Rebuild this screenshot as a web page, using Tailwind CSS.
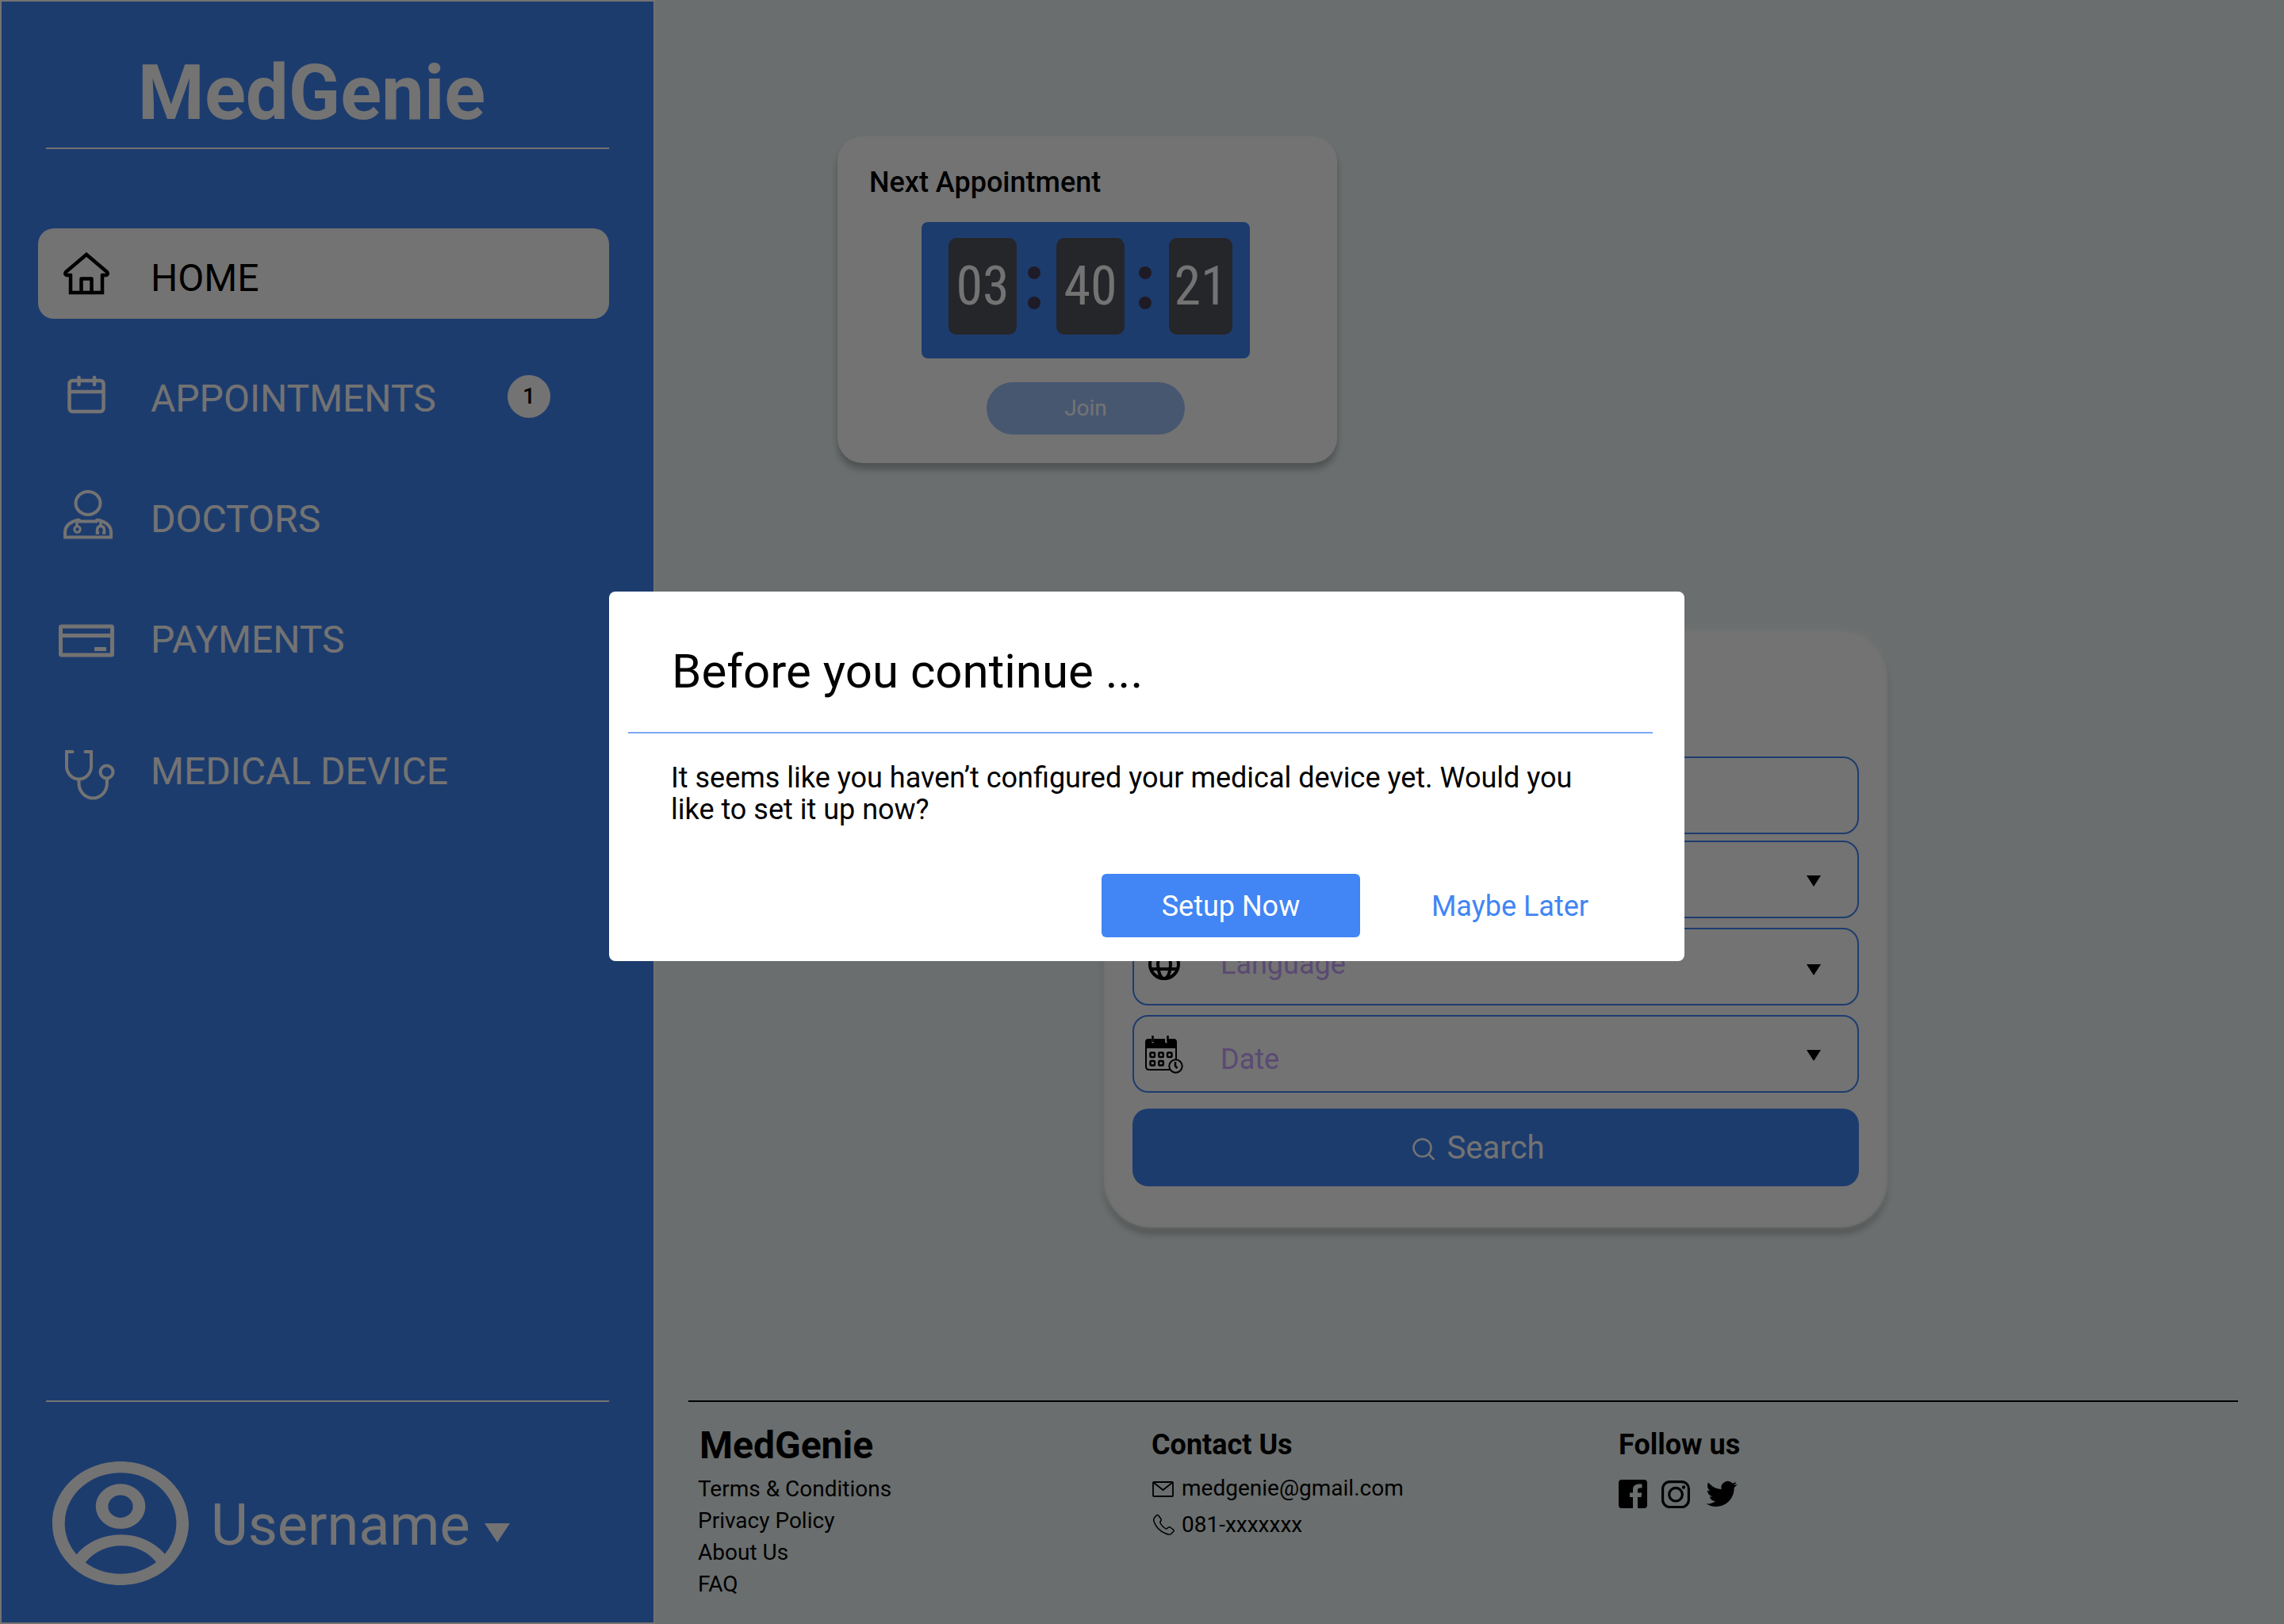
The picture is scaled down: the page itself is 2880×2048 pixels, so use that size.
<!DOCTYPE html>
<html lang="en">
<head>
<meta charset="utf-8">
<meta name="viewport" content="width=device-width, initial-scale=1">
<title>MedGenie</title>
<script src="https://cdn.jsdelivr.net/npm/@tailwindcss/browser@4"></script>
</head>
<body class="bg-[#ebf4f4] font-[Roboto,sans-serif] text-black">
<div class="flex min-h-screen">

  <!-- Sidebar -->
  <aside class="flex w-[826px] shrink-0 flex-col border-2 border-white bg-[#4285f4] text-white">
    <div class="ml-14 mr-14 border-b-2 border-white pt-[59px] pr-10 pb-[13px] text-center text-8xl leading-[112px] font-bold">MedGenie</div>
    <nav class="mt-[100px] mr-14 ml-[46px] flex flex-col gap-[38px] text-5xl leading-[56px]">
      <a href="#" class="flex h-[114px] items-center rounded-[20px] bg-white pl-5 text-black">
        <svg class="h-24 w-20 shrink-0" viewBox="0 0 80 96" fill="none" stroke="currentColor" stroke-width="4.5" stroke-linejoin="round" stroke-linecap="round"><path d="M21 50h-5q-3-1-1-4L41 24l26 22q2 3-1 4h-5" stroke-linejoin="miter"/><path d="M21 50v22h40V50" stroke-linejoin="miter"/><path d="M34.500 72V54.500h13V72"/></svg>
        <span class="pt-3 pl-[42px]">HOME</span>
      </a>
      <a href="#" class="flex h-[114px] items-center pl-5">
        <svg class="h-24 w-20 shrink-0" viewBox="0 0 80 96" fill="none" stroke="currentColor" stroke-width="4.500" stroke-linecap="round"><rect x="19.500" y="31" width="43" height="39" rx="4"/><path d="M19.500 45h43"/><path d="M31.500 27v9M51 27v9"/></svg>
        <span class="pt-3 pl-[42px]">APPOINTMENTS</span>
        <span class="mt-1.5 ml-auto mr-[74px] flex size-[54px] items-center justify-center rounded-full bg-white text-[28px] leading-8 font-medium text-black">1</span>
      </a>
      <a href="#" class="flex h-[114px] items-center pl-5">
        <svg class="h-24 w-20 shrink-0" viewBox="0 0 80 96" fill="none" stroke="currentColor" stroke-width="4"><ellipse cx="43" cy="33.500" rx="15.500" ry="14.500"/><path d="M31 54.500q-17 4-17 16V76.500h58V70.500q0-12-17-16"/><path d="M31 53.500l1.500 3h21l1.500-3"/><path d="M29 57v6M59 57v6" stroke-width="3.500"/><circle cx="29.500" cy="66.500" r="3.700" stroke-width="3"/><path d="M57 71h-2.500v-3q0-5.500 4.500-5.500t4.500 5.500v3H61" stroke-width="3.500"/></svg>
        <span class="pt-3 pl-[42px]">DOCTORS</span>
      </a>
      <a href="#" class="flex h-[114px] items-center pl-5">
        <svg class="h-24 w-20 shrink-0" viewBox="0 0 80 96" fill="none" stroke="currentColor" stroke-width="5"><rect x="8.500" y="37" width="65" height="36" rx="1"/><path d="M8 48.500h66"/><path d="M51 65.500h15"/></svg>
        <span class="pt-3 pl-[42px]">PAYMENTS</span>
      </a>
      <a href="#" class="mt-3.5 flex h-[114px] items-center pl-5">
        <svg class="h-24 w-20 shrink-0" viewBox="0 0 80 96" fill="none" stroke="currentColor" stroke-width="4" stroke-linecap="round"><path d="M23.500 29H16v18.500a15.500 16 0 0 0 31 0V29h-7.500"/><path d="M31.500 64v5a17.700 18.500 0 0 0 35.400 0V64"/><circle cx="66.500" cy="54.500" r="8"/></svg>
        <span class="pt-3 pl-[42px]">MEDICAL DEVICE</span>
      </a>
    </nav>
    <div class="mx-14 mt-auto border-t-2 border-white"></div>
    <button type="button" class="mt-[75px] mb-[47px] ml-16 flex items-center self-start text-7xl leading-[84px]">
      <svg class="h-[156px] w-[172px]" viewBox="1 1 22 22" preserveAspectRatio="none" fill="currentColor" fill-rule="evenodd"><path d="M16 9a4 4 0 1 1-8 0 4 4 0 0 1 8 0zm-2 0a2 2 0 1 1-4 0 2 2 0 0 1 4 0z"/><path d="M12 1C5.925 1 1 5.925 1 12s4.925 11 11 11 11-4.925 11-11S18.075 1 12 1zM3 12c0 2.090.713 4.014 1.908 5.542A8.986 8.986 0 0 1 12.065 14a8.984 8.984 0 0 1 7.092 3.458A9 9 0 1 0 3 12zm9 9a8.963 8.963 0 0 1-5.672-2.012A6.992 6.992 0 0 1 12.065 16a6.991 6.991 0 0 1 5.689 2.920A8.964 8.964 0 0 1 12 21z"/></svg>
      <span class="pt-1.5 pl-7">Username</span>
      <svg class="mt-6 ml-[18px] h-6 w-8" viewBox="0 0 32 24" fill="currentColor"><path d="M0 0h32L16 24z"/></svg>
    </button>
  </aside>

  <div class="flex min-w-0 flex-1 flex-col">
    <main class="flex flex-col items-start">
      <!-- Next appointment -->
      <section class="mt-[172px] ml-[230px] flex w-[630px] flex-col items-center rounded-[32px] bg-white pt-[37px] pr-1 pb-9 shadow-[0_8px_8px_rgba(0,0,0,0.25)]">
        <h2 class="self-start pl-10 text-4xl leading-[42px] font-medium">Next Appointment</h2>
        <div class="mt-[29px] flex h-[172px] w-[414px] rounded-lg bg-[#4285f4] pt-5 pr-[22px] pl-[34px] font-['Roboto_Condensed','Liberation_Sans_Narrow',Roboto,sans-serif] text-[68px] leading-none text-white">
          <span class="flex h-[122px] w-[86px] items-center justify-center rounded-[10px] bg-[#52545e]">03</span>
          <span class="flex h-[122px] w-[50px] flex-col items-center justify-center gap-[22px] pt-1 pr-1.5"><i class="size-4 rounded-full bg-[#433c54]"></i><i class="size-4 rounded-full bg-[#433c54]"></i></span>
          <span class="flex h-[122px] w-[86px] items-center justify-center rounded-[10px] bg-[#52545e]">40</span>
          <span class="flex h-[122px] flex-1 flex-col items-center justify-center gap-[22px] pt-1 pr-1"><i class="size-4 rounded-full bg-[#433c54]"></i><i class="size-4 rounded-full bg-[#433c54]"></i></span>
          <span class="flex h-[122px] w-[80px] items-center justify-center rounded-[10px] bg-[#52545e]">21</span>
        </div>
        <button type="button" class="mt-[30px] h-[66px] w-[250px] rounded-full bg-[#4285f4]/50 text-[28px] leading-8 text-white">Join</button>
      </section>

      <!-- Doctor search -->
      <form class="relative mt-[210px] ml-[566px] flex w-[988px] flex-col rounded-[60px] px-9 pt-40 pb-[52px] text-4xl shadow-[0_8px_8px_rgba(0,0,0,0.25)]">
        <span class="absolute inset-0 rounded-[60px] bg-white blur-[4px]"></span>
        <input type="text" aria-label="Doctor" class="relative h-[98px] rounded-[20px] border-2 border-[#4285f4] pl-[109px]">
        <div class="relative mt-2">
          <select aria-label="Specialty" class="block h-[98px] w-full appearance-none rounded-[20px] border-2 border-[#4285f4] pl-[109px]"><option></option></select>
          <svg class="pointer-events-none absolute top-11 right-12 h-3.5 w-[18px]" viewBox="0 0 18 14"><path d="M0 0h18L9 14z"/></svg>
        </div>
        <div class="relative mt-3 text-[#c8a4ff]">
          <select aria-label="Language" class="block h-[98px] w-full appearance-none rounded-[20px] border-2 border-[#4285f4] pb-1.5 pl-[109px]"><option>Language</option></select>
          <svg class="pointer-events-none absolute top-[26px] left-5 size-10 text-black" viewBox="0 0 40 40" fill="none" stroke="currentColor" stroke-width="4"><circle cx="20" cy="20" r="18"/><ellipse cx="20" cy="20" rx="8" ry="18"/><path d="M3 14h34M3 26h34"/></svg>
          <svg class="pointer-events-none absolute top-[46px] right-12 h-3.5 w-[18px]" viewBox="0 0 18 14"><path d="M0 0h18L9 14z"/></svg>
        </div>
        <div class="relative mt-3 text-[#c8a4ff]">
          <select aria-label="Date" class="block h-[98px] w-full appearance-none rounded-[20px] border-2 border-[#4285f4] pt-3.5 pl-[109px]"><option>Date</option></select>
          <svg class="pointer-events-none absolute top-[26px] left-4 size-12 text-black" viewBox="0 0 48 48" fill="none" stroke="currentColor" stroke-width="2"><path d="M4 4h4v4q1.500 3 3 0V4h14v4q1.500 3 3 0V4h8q4 0 4 4v8H0V8q0-4 4-4z" fill="currentColor" stroke="none"/><path d="M9.500 0v8M28.500 0v8" stroke-width="2.500"/><path d="M1 14v25q0 4 4 4h26M39 14v17"/><g stroke-width="2.500"><rect x="6.500" y="21.500" width="5.500" height="5.500" rx="1"/><rect x="17.300" y="21.500" width="5.500" height="5.500" rx="1"/><rect x="28" y="21.500" width="5.500" height="5.500" rx="1"/><rect x="6.500" y="32" width="5.500" height="5.500" rx="1"/><rect x="17.300" y="32" width="5.500" height="5.500" rx="1"/></g><circle cx="38.500" cy="38.500" r="8.200" fill="#fff"/><path d="M38 33v5.500l2.500 2.500" stroke-width="2.500"/></svg>
          <svg class="pointer-events-none absolute top-11 right-12 h-3.5 w-[18px]" viewBox="0 0 18 14"><path d="M0 0h18L9 14z"/></svg>
        </div>
        <button type="submit" class="relative mt-5 flex h-[98px] items-center justify-center gap-4 rounded-[20px] bg-[#4285f4] pt-0.5 pr-11 text-[40px] leading-[48px] text-white">
          <svg class="mt-0.5 size-7" viewBox="0 0 28 28" fill="none" stroke="currentColor" stroke-width="2.500"><circle cx="12.500" cy="12.500" r="11"/><path d="M20.500 20.500L27.500 27.500"/></svg>
          Search
        </button>
      </form>
    </main>

    <!-- Footer -->
    <footer class="mt-auto mr-[58px] ml-[42px] grid grid-cols-[572fr_589fr_781fr] border-t-2 border-black pt-[27px] pb-[30px] pl-3 text-[28px] leading-10">
      <div class="flex flex-col items-start">
        <h2 class="mb-[7px] pl-0.5 text-5xl leading-[56px] font-bold">MedGenie</h2>
        <a href="#">Terms &amp; Conditions</a>
        <a href="#">Privacy Policy</a>
        <a href="#">About Us</a>
        <a href="#">FAQ</a>
      </div>
      <div class="flex flex-col items-start pt-1.5">
        <h3 class="text-4xl leading-[42px] font-bold">Contact Us</h3>
        <a href="#" class="mt-3.5 flex items-center gap-2"><svg class="mt-1 h-7 w-[30px]" viewBox="0 0 30 28" fill="none" stroke="currentColor" stroke-width="1.800"><rect x="2" y="4" width="25" height="18" rx="1"/><path d="M2.500 4.500L14.500 14 26.500 4.500"/></svg>medgenie@gmail.com</a>
        <a href="#" class="mt-1.5 flex items-center gap-2"><svg class="h-7 w-[30px]" viewBox="0 0 30 28" fill="none" stroke="currentColor" stroke-width="1.500" stroke-linejoin="round"><path d="M6.500 1.800L3.200 5.500Q2.500 7 3 9.500Q6.500 20.500 18 25Q22 26.500 24 26L27.800 22.300Q28.500 21 27.500 20L23.500 17Q22 16.300 21 17.300L19 19Q17.500 19 14.500 16.300Q11 12.500 10.800 10.500L12 8.500Q12.600 7.500 11.800 6.300L8.500 2Q7.500 1 6.500 1.800Z"/></svg>081-xxxxxxx</a>
      </div>
      <div class="flex flex-col items-start pt-1.5">
        <h3 class="text-4xl leading-[42px] font-bold">Follow us</h3>
        <div class="mt-[23px] flex">
          <a href="#" aria-label="Facebook"><svg class="size-9" viewBox="0 0 36 36" fill="currentColor"><path d="M4 0h28q4 0 4 4v28q0 4-4 4h-8V22h4.500l.8-5.500H24v-3.500q0-2.500 3-2.500h2.500V5.500H25q-7 .5-7 7v4h-4V22h4v14H4q-4 0-4-4V4q0-4 4-4z"/></svg></a>
          <a href="#" aria-label="Instagram" class="ml-[18px]"><svg class="size-9" viewBox="0 0 36 36" fill="none" stroke="currentColor" stroke-width="3.200"><rect x="1.600" y="2.600" width="32.800" height="32" rx="9"/><circle cx="18" cy="18.700" r="8.300"/><circle cx="28" cy="9.500" r="2.200" fill="currentColor" stroke="none"/></svg></a>
          <a href="#" aria-label="Twitter" class="ml-5"><svg class="h-9 w-10" viewBox="0 1 24 22" fill="currentColor"><path d="M23.953 4.570a10 10 0 0 1-2.825.775 4.958 4.958 0 0 0 2.163-2.723c-.951.555-2.005.959-3.127 1.184a4.920 4.920 0 0 0-8.384 4.482C7.690 8.095 4.067 6.130 1.640 3.162a4.822 4.822 0 0 0-.666 2.475c0 1.710.870 3.213 2.188 4.096a4.904 4.904 0 0 1-2.228-.616v.060a4.923 4.923 0 0 0 3.946 4.827 4.996 4.996 0 0 1-2.212.085 4.936 4.936 0 0 0 4.604 3.417 9.867 9.867 0 0 1-6.102 2.105c-.390 0-.779-.023-1.170-.067a13.995 13.995 0 0 0 7.557 2.209c9.053 0 13.998-7.496 13.998-13.985 0-.210 0-.420-.015-.630A9.935 9.935 0 0 0 24 4.590z"/></svg></a>
        </div>
      </div>
    </footer>
  </div>
</div>

<!-- Setup prompt -->
<div class="fixed inset-0 flex items-start justify-center bg-black/55 pt-[746px] pl-3">
  <div role="dialog" aria-modal="true" aria-labelledby="setup-title" class="w-[1356px] rounded-lg bg-white pt-[66px] pb-[30px] text-4xl">
    <h1 id="setup-title" class="px-[79px] text-[60px] leading-[70px]">Before you continue ...</h1>
    <div class="mt-[41px] mr-10 ml-6 h-0.5 bg-[#7ba9f5]"></div>
    <p class="mt-9 pr-[120px] pl-[78px] leading-10">It seems like you haven’t configured your medical device yet. Would you like to set it up now?</p>
    <div class="mt-[61px] flex justify-end gap-[90px] pr-[121px]">
      <button type="button" class="h-20 w-[326px] rounded-md bg-[#4285f4] pt-0.5 text-white">Setup Now</button>
      <button type="button" class="h-20 pt-0.5 text-[#4285f4]">Maybe Later</button>
    </div>
  </div>
</div>
</body>
</html>
